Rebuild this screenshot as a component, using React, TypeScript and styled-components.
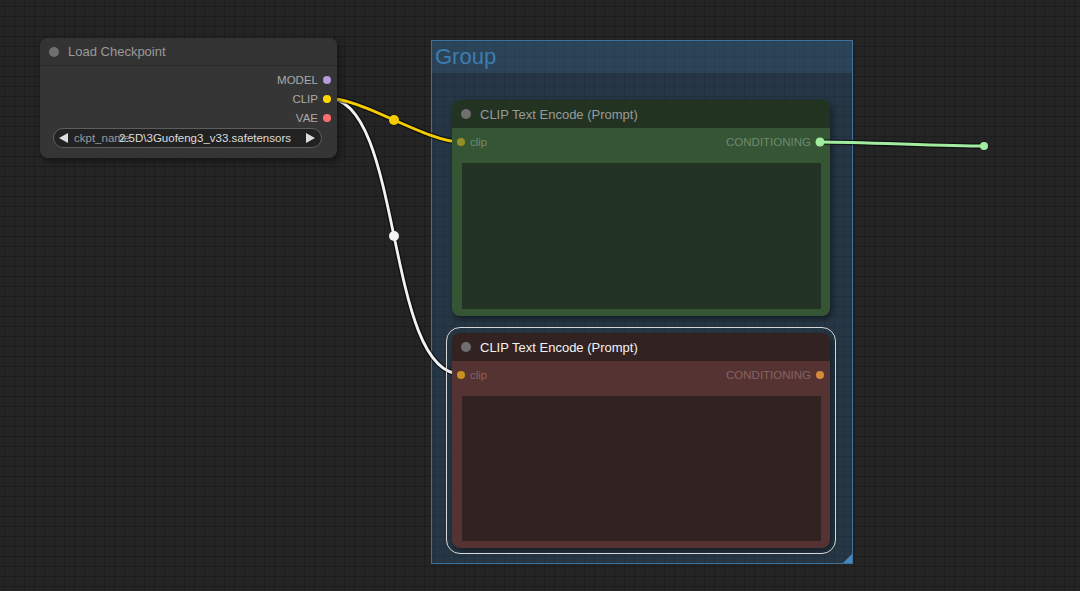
import React from "react";
import styled, { createGlobalStyle } from "styled-components";

const Global = createGlobalStyle`
  html, body { margin: 0; padding: 0; width: 100%; height: 100%; overflow: hidden; }
  body { font-family: "Liberation Sans", Arial, sans-serif; background: #232323; }
  #root { width: 100%; height: 100%; }
`;

const Canvas = styled.div`
  position: relative;
  width: 1080px;
  height: 591px;
  overflow: hidden;
  background-color: #242424;
  background-image:
    linear-gradient(to right, rgba(0, 0, 0, 0.2) 1px, transparent 1px),
    linear-gradient(to bottom, rgba(0, 0, 0, 0.2) 1px, transparent 1px);
  background-size: 10px 10px;
  background-position: 4px 6px;
`;

const Group = styled.div`
  position: absolute;
  left: 431px;
  top: 40px;
  width: 422px;
  height: 524px;
  box-sizing: border-box;
  border: 1.5px solid #3d709a;
  background: rgba(45, 105, 155, 0.27);
  display: flex;
  flex-direction: column;
`;

const GroupTitle = styled.div`
  height: 32px;
  line-height: 31px;
  padding-left: 3px;
  font-size: 22px;
  color: #3e7cb0;
  background: rgba(80, 140, 190, 0.16);
  flex: none;
`;

const ResizeCorner = styled.div`
  position: absolute;
  right: 0;
  bottom: 0;
  width: 9px;
  height: 9px;
  background: #4688bd;
  clip-path: polygon(100% 0, 100% 100%, 0 100%);
`;

const Node = styled.div<{ $x: number; $y: number; $w: number; $h: number; $body: string }>`
  position: absolute;
  left: ${(p) => p.$x}px;
  top: ${(p) => p.$y}px;
  width: ${(p) => p.$w}px;
  height: ${(p) => p.$h}px;
  background: ${(p) => p.$body};
  border-radius: 8px;
  box-shadow: 2px 3px 6px rgba(0, 0, 0, 0.45);
  display: flex;
  flex-direction: column;
  z-index: 2;
`;

const SelectRing = styled.div`
  position: absolute;
  inset: -6px;
  border: 1.5px solid #d6d6d6;
  border-radius: 14px;
  pointer-events: none;
`;

const Title = styled.div<{ $bg: string; $color: string; $line?: boolean }>`
  height: 28px;
  flex: none;
  display: flex;
  align-items: center;
  gap: 9px;
  padding-left: 9px;
  background: ${(p) => p.$bg};
  color: ${(p) => p.$color};
  font-size: 13px;
  border-radius: 8px 8px 0 0;
  box-sizing: border-box;
  border-bottom: ${(p) => (p.$line ? "1px solid #2b2b2b" : "none")};
`;

const TitleDot = styled.span`
  width: 10px;
  height: 10px;
  border-radius: 50%;
  background: #6f6f6f;
  flex: none;
`;

const Outputs = styled.div`
  display: flex;
  flex-direction: column;
  padding-top: 4px;
`;

const OutRow = styled.div`
  height: 19px;
  display: flex;
  align-items: center;
  justify-content: flex-end;
  gap: 5px;
  padding-right: 6px;
  font-size: 11.5px;
  color: #aaaaaa;
`;

const SlotDot = styled.span<{ $c: string }>`
  width: 8px;
  height: 8px;
  border-radius: 50%;
  background: ${(p) => p.$c};
  flex: none;
`;

const Combo = styled.div`
  margin: 1px 15px 0 13px;
  height: 20px;
  box-sizing: border-box;
  border: 1px solid #5e5e5e;
  border-radius: 10px;
  background: #222222;
  display: flex;
  align-items: center;
  padding: 0 6px 0 5px;
  font-size: 11.5px;
`;

const Arrow = styled.span<{ $dir: "l" | "r" }>`
  width: 9px;
  height: 10px;
  background: #dddddd;
  flex: none;
  clip-path: ${(p) =>
    p.$dir === "l" ? "polygon(0 50%, 100% 0, 100% 100%)" : "polygon(0 0, 100% 50%, 0 100%)"};
`;

const ComboField = styled.div`
  flex: 1;
  display: grid;
  align-items: center;
  padding: 0 15px 0 6px;
  white-space: nowrap;
  overflow: hidden;
  & > * { grid-area: 1 / 1; }
`;

const ComboLabel = styled.span`
  justify-self: start;
  color: #999999;
`;

const ComboValue = styled.span`
  justify-self: end;
  color: #dddddd;
`;

const SlotRow = styled.div<{ $color: string }>`
  height: 20px;
  margin-top: 4px;
  flex: none;
  display: flex;
  align-items: center;
  padding: 0 6px 0 5px;
  font-size: 11.5px;
  color: ${(p) => p.$color};
`;

const SlotSide = styled.div`
  display: flex;
  align-items: center;
  gap: 5px;
`;

const Spacer = styled.div`
  flex: 1;
`;

const TextArea = styled.div<{ $bg: string }>`
  margin: 11px 9px 7px 10px;
  flex: 1;
  background: ${(p) => p.$bg};
`;

const LinkLayer = styled.svg<{ $z: number }>`
  position: absolute;
  left: 0;
  top: 0;
  width: 1080px;
  height: 591px;
  pointer-events: none;
  z-index: ${(p) => p.$z};
`;

type Pt = [number, number];

function bezier(a: Pt, b: Pt) {
  const d = Math.hypot(b[0] - a[0], b[1] - a[1]) * 0.25;
  const c1: Pt = [a[0] + d, a[1]];
  const c2: Pt = [b[0] - d, b[1]];
  const mid: Pt = [
    (a[0] + 3 * c1[0] + 3 * c2[0] + b[0]) / 8,
    (a[1] + 3 * c1[1] + 3 * c2[1] + b[1]) / 8,
  ];
  return { d: `M${a[0]},${a[1]} C${c1[0]},${c1[1]} ${c2[0]},${c2[1]} ${b[0]},${b[1]}`, mid };
}

function Link({ a, b, color, midDot = true, endDot = false }: { a: Pt; b: Pt; color: string; midDot?: boolean; endDot?: boolean }) {
  const { d, mid } = bezier(a, b);
  return (
    <g>
      <path d={d} fill="none" stroke="rgba(0,0,0,0.55)" strokeWidth={5.5} strokeLinecap="round" />
      <path d={d} fill="none" stroke={color} strokeWidth={2.8} strokeLinecap="round" />
      {midDot && <circle cx={mid[0]} cy={mid[1]} r={5} fill={color} />}
      {endDot && (
        <>
          <circle cx={a[0]} cy={a[1]} r={4.5} fill={color} />
          <circle cx={b[0]} cy={b[1]} r={4} fill={color} />
        </>
      )}
    </g>
  );
}

function ClipNode({
  y,
  h,
  titleBg,
  body,
  area,
  titleColor,
  label,
  inDot,
  outDot,
  selected,
}: {
  y: number;
  h: number;
  titleBg: string;
  body: string;
  area: string;
  titleColor: string;
  label: string;
  inDot: string;
  outDot: string;
  selected?: boolean;
}) {
  return (
    <Node $x={452} $y={y} $w={378} $h={h} $body={body}>
      {selected && <SelectRing />}
      <Title $bg={titleBg} $color={titleColor}>
        <TitleDot />
        CLIP Text Encode (Prompt)
      </Title>
      <SlotRow $color={label}>
        <SlotSide>
          <SlotDot $c={inDot} />
          clip
        </SlotSide>
        <Spacer />
        <SlotSide>
          CONDITIONING
          <SlotDot $c={outDot} />
        </SlotSide>
      </SlotRow>
      <TextArea $bg={area} />
    </Node>
  );
}

export default function App() {
  return (
    <Canvas>
      <Global />
      <Group>
        <GroupTitle>Group</GroupTitle>
        <ResizeCorner />
      </Group>

      <LinkLayer $z={1} viewBox="0 0 1080 591">
        <Link a={[327, 98]} b={[461, 374]} color="#f2f2f2" />
        <Link a={[327, 98]} b={[461, 142]} color="#f5cc00" />
      </LinkLayer>

      <Node $x={40} $y={38} $w={297} $h={120} $body="#353535">
        <Title $bg="#333333" $color="#9a9a9a" $line>
          <TitleDot />
          Load Checkpoint
        </Title>
        <Outputs>
          <OutRow>
            MODEL
            <SlotDot $c="#b39ddb" />
          </OutRow>
          <OutRow>
            CLIP
            <SlotDot $c="#ffd500" />
          </OutRow>
          <OutRow>
            VAE
            <SlotDot $c="#ff6e6e" />
          </OutRow>
        </Outputs>
        <Combo>
          <Arrow $dir="l" />
          <ComboField>
            <ComboLabel>ckpt_name</ComboLabel>
            <ComboValue>2.5D\3Guofeng3_v33.safetensors</ComboValue>
          </ComboField>
          <Arrow $dir="r" />
        </Combo>
      </Node>

      <ClipNode
        y={100}
        h={216}
        titleBg="#223322"
        body="#355535"
        area="#233323"
        titleColor="#9a9a9a"
        label="#6e8a6e"
        inDot="#939126"
        outDot="#a2e8a0"
      />
      <ClipNode
        y={333}
        h={215}
        titleBg="#332222"
        body="#553333"
        area="#332222"
        titleColor="#f2f2f2"
        label="#876262"
        inDot="#c8921e"
        outDot="#d48a38"
        selected
      />

      <LinkLayer $z={3} viewBox="0 0 1080 591">
        <Link a={[820, 142]} b={[984, 146]} color="#a2eca0" midDot={false} endDot />
      </LinkLayer>
    </Canvas>
  );
}
